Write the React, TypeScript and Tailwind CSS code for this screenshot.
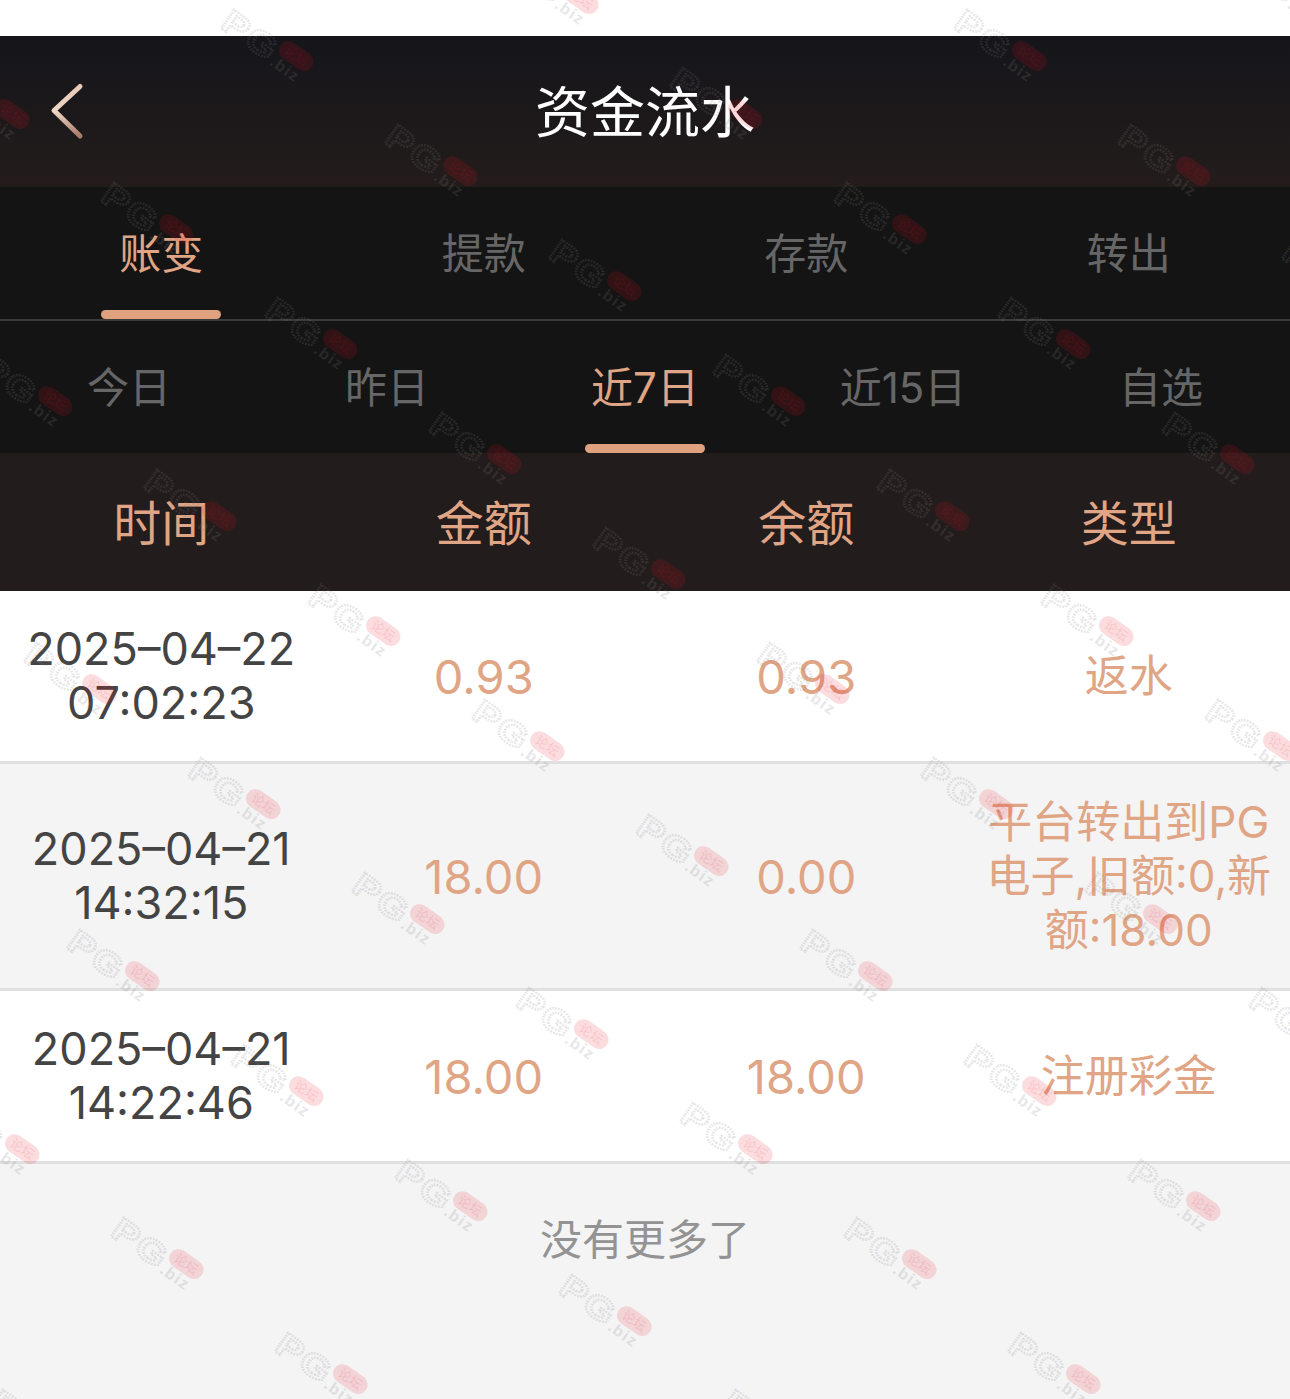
import React from 'react'

const FONT = "[font-family:'Inter','Noto_Sans_CJK_SC',sans-serif]"

const TABS = ['账变', '提款', '存款', '转出']
const RANGES = ['今日', '昨日', '近7日', '近15日', '自选']
const COLUMNS = ['时间', '金额', '余额', '类型']

type Record = {
  date: string
  time: string
  amount: string
  balance: string
  type: string
}

const RECORDS: Record[] = [
  { date: '2025–04–22', time: '07:02:23', amount: '0.93', balance: '0.93', type: '返水' },
  {
    date: '2025–04–21',
    time: '14:32:15',
    amount: '18.00',
    balance: '0.00',
    type: '平台转出到PG电子,旧额:0,新额:18.00',
  },
  { date: '2025–04–21', time: '14:22:46', amount: '18.00', balance: '18.00', type: '注册彩金' },
]

// stamp repeats on a skewed lattice across the whole page
const getStamps = () => {
  const stamps: { x: number; y: number }[] = []
  for (let k = -14; k <= 14; k++) {
    for (let l = -14; l <= 14; l++) {
      const x = 219 + 164 * k - 284.5 * l
      const y = 27 + 115 * k + 57.5 * l
      if (x > -130 && x < 1290 && y > -70 && y < 1420) stamps.push({ x, y })
    }
  }
  return stamps
}

const Stamp = ({ x, y }: { x: number; y: number }) => (
  <svg
    className="absolute overflow-visible"
    style={{ left: x, top: y }}
    width="1"
    height="1"
    aria-hidden
  >
    <g transform="rotate(35)">
      <text
        transform="scale(1.2 1)"
        x="0"
        y="0"
        fontFamily="Liberation Sans"
        fontWeight="700"
        fontSize="33"
        letterSpacing="2"
        fill="none"
        stroke="#808080"
        strokeOpacity="0.2"
        strokeWidth="2.5"
        strokeDasharray="1.6 1"
      >
        PG
      </text>
      <rect x="61" y="-30" width="38" height="19" rx="9.5" fill="#e8101c" opacity="0.14" />
      <text
        x="80"
        y="-16"
        textAnchor="middle"
        fontFamily="Noto Sans CJK SC"
        fontSize="13"
        fill="#e8101c"
        opacity="0.12"
      >
        论坛
      </text>
      <text
        x="62"
        y="2"
        fontFamily="Liberation Sans"
        fontWeight="700"
        fontSize="16"
        letterSpacing="1.5"
        fill="#808080"
        opacity="0.18"
      >
        .biz
      </text>
    </g>
  </svg>
)

const BackIcon = () => (
  <svg width="34" height="60" viewBox="0 0 34 60" fill="none" aria-hidden>
    <defs>
      <linearGradient id="back-stroke" x1="0" y1="0" x2="0" y2="1">
        <stop offset="0" stopColor="#e9c9b4" />
        <stop offset="0.5" stopColor="#f0d6c6" />
        <stop offset="1" stopColor="#a87a68" />
      </linearGradient>
    </defs>
    <path
      d="M30 4.5 L4 28.5 L30 54"
      stroke="url(#back-stroke)"
      strokeWidth="5"
      strokeLinecap="round"
      strokeLinejoin="round"
    />
  </svg>
)

const RecordRow = ({ record, striped }: { record: Record; striped: boolean }) => (
  <div
    className={`grid grid-cols-4 items-center border-b-[3px] border-b-[#e0e0e0] ${
      striped ? 'h-[227px] bg-[#f4f4f5]' : 'h-[173px] bg-white'
    }`}
  >
    <div className="text-center text-[45px] leading-[54px] text-[#444444]">
      <p>{record.date}</p>
      <p>{record.time}</p>
    </div>
    <p className="pt-[2px] text-center text-[47px] text-[#e0a585]">{record.amount}</p>
    <p className="pt-[2px] text-center text-[47px] text-[#e0a585]">{record.balance}</p>
    <p className="px-[14px] text-center text-[44px] leading-[54px] text-[#e0a585] [overflow-wrap:anywhere]">
      {record.type}
    </p>
  </div>
)

export default function App() {
  const stamps = React.useMemo(getStamps, [])

  return (
    <div className={`relative h-[1399px] w-[1290px] overflow-hidden bg-[#f4f4f5] ${FONT}`}>
      <div className="h-[36px] bg-white" />

      <header className="grid h-[151px] grid-cols-[1fr_auto_1fr] items-center bg-gradient-to-b from-[#15151a] to-[#231c1b] pt-[1px]">
        <button className="justify-self-start pl-[50px]" aria-label="返回">
          <BackIcon />
        </button>
        <h1 className="text-[55px] font-normal text-white">资金流水</h1>
      </header>

      <nav className="grid h-[134px] grid-cols-4 border-b-2 border-b-[#3c3c3c] bg-[#141414]">
        {TABS.map((tab, index) => (
          <div key={tab} className="flex flex-col items-center pt-[46px]">
            <span
              className={`text-[42px] leading-[42px] ${
                index === 0 ? 'text-[#e0a585]' : 'text-[#666666]'
              }`}
            >
              {tab}
            </span>
            {index === 0 && <span className="mt-auto h-[9px] w-[120px] rounded-full bg-[#e0a27e]" />}
          </div>
        ))}
      </nav>

      <nav className="grid h-[132px] grid-cols-5 bg-[#141414]">
        {RANGES.map((range, index) => (
          <div key={range} className="flex flex-col items-center pt-[46px]">
            <span
              className={`text-[42px] leading-[42px] ${
                index === 2 ? 'text-[#e0a585]' : 'text-[#666666]'
              }`}
            >
              {range}
            </span>
            {index === 2 && <span className="mt-auto h-[9px] w-[120px] rounded-full bg-[#e0a27e]" />}
          </div>
        ))}
      </nav>

      <div className="grid h-[138px] grid-cols-4 items-center bg-[#231c1c] pt-[4px]">
        {COLUMNS.map((column) => (
          <span key={column} className="text-center text-[48px] text-[#e0a585]">
            {column}
          </span>
        ))}
      </div>

      {RECORDS.map((record, index) => (
        <RecordRow key={record.time} record={record} striped={index % 2 === 1} />
      ))}

      <p className="pt-[55px] text-center text-[42px] leading-[42px] text-[#939393]">没有更多了</p>

      <div className="pointer-events-none absolute inset-0 overflow-hidden">
        {stamps.map((stamp) => (
          <Stamp key={`${stamp.x}-${stamp.y}`} x={stamp.x} y={stamp.y} />
        ))}
      </div>
    </div>
  )
}
